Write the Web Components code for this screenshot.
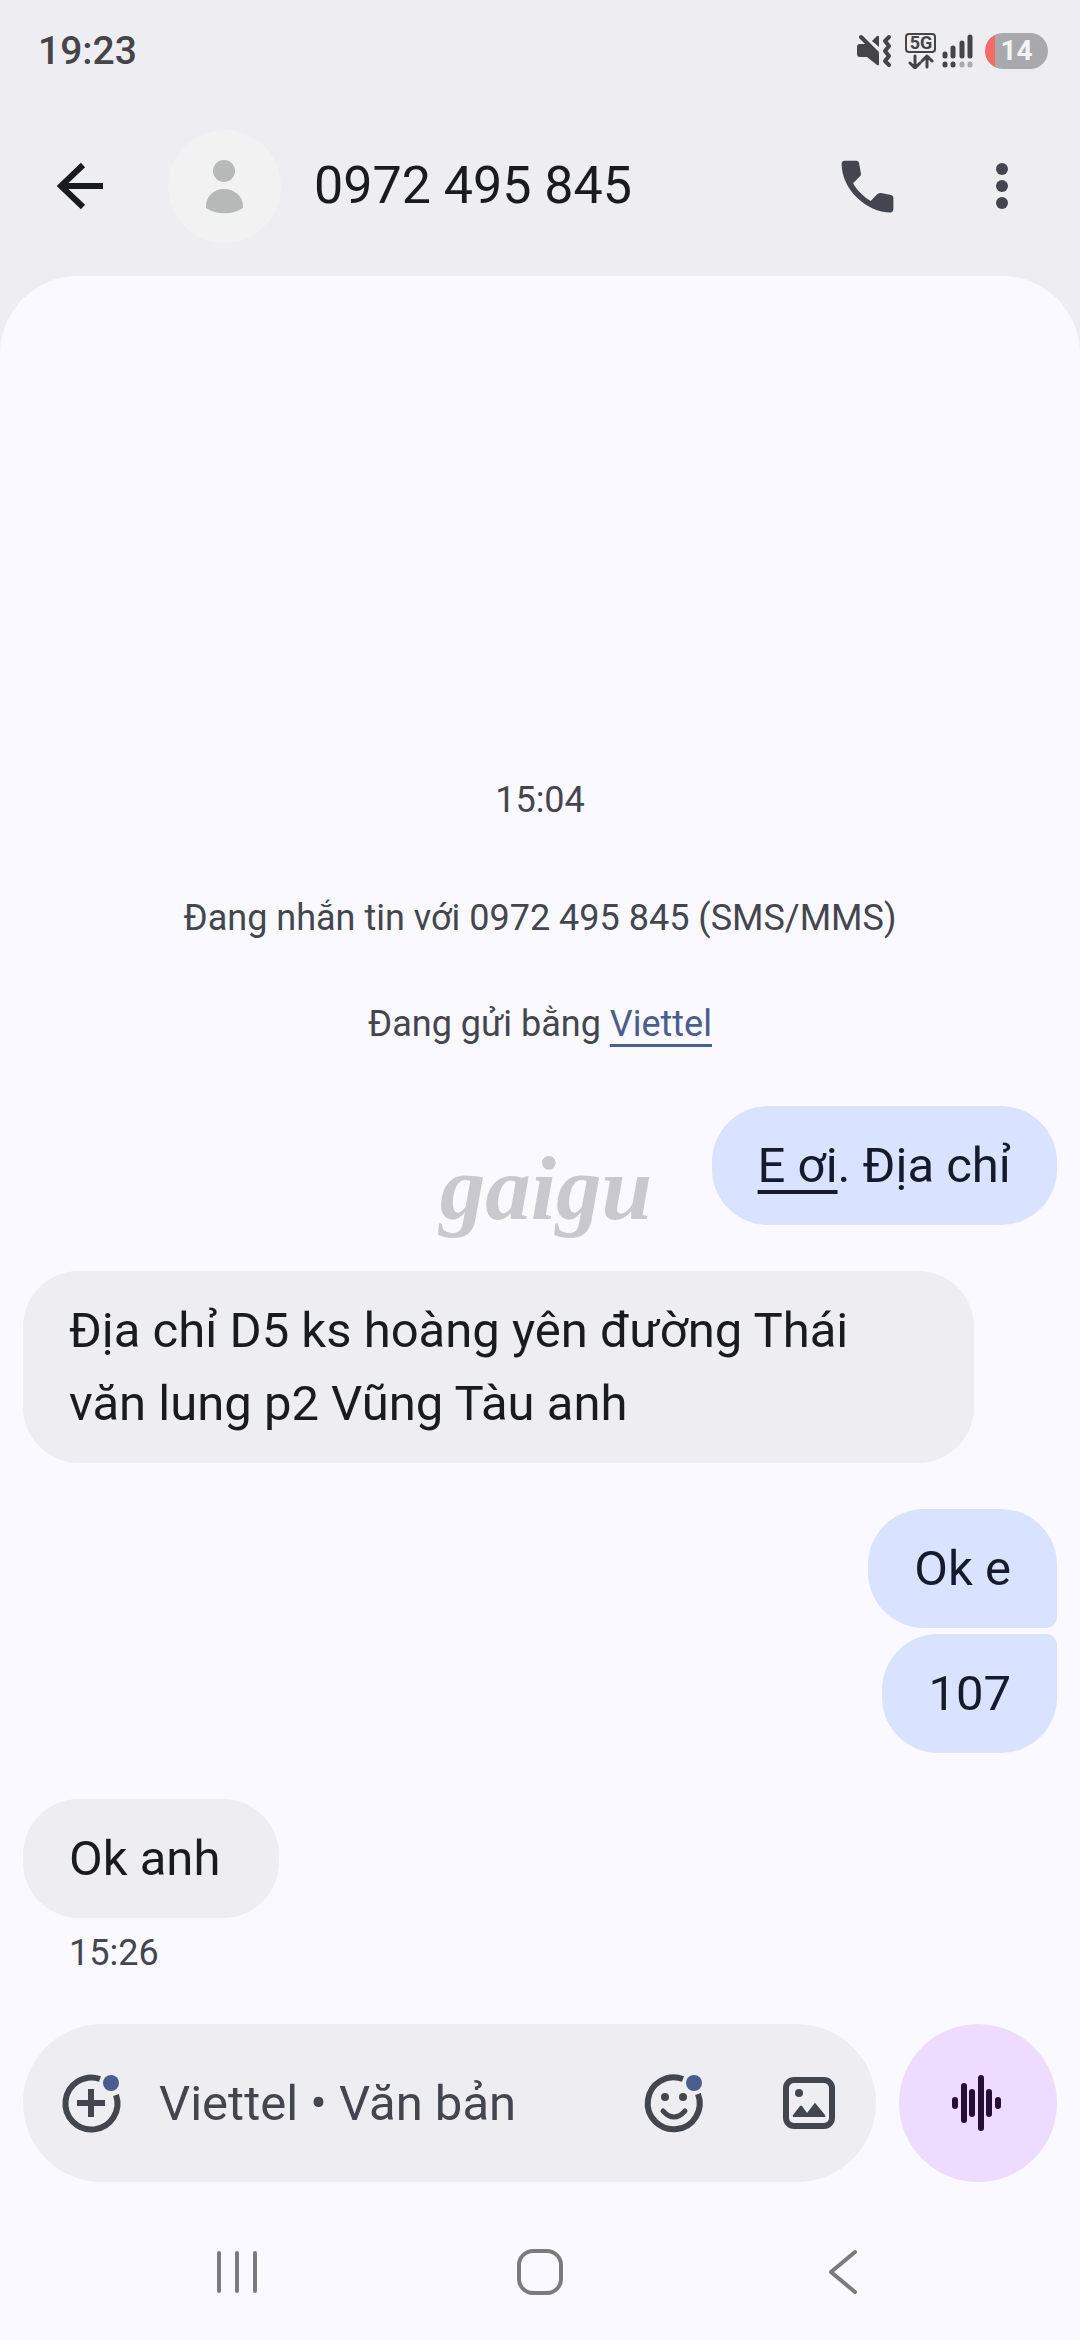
<!DOCTYPE html>
<html lang="vi">
<head>
<meta charset="utf-8">
<meta name="viewport" content="width=device-width, initial-scale=1">
<title>0972 495 845</title>
<style>
  html, body { margin: 0; }
  body { background: #eeedf2; font-family: Roboto, "Noto Sans", sans-serif; color: #1a1b20; }
</style>
</head>
<body>
<chat-screen>
  <status-bar slot="top" time="19:23" network="5G" battery="14"></status-bar>
  <app-bar slot="top">0972 495 845</app-bar>

  <thread-note>15:04</thread-note>
  <thread-note>Đang nhắn tin với 0972 495 845 (SMS/MMS)</thread-note>
  <thread-note>Đang gửi bằng <a href="#sim">Viettel</a></thread-note>
  <message-group side="out">
    <chat-bubble side="out"><a href="#event">E ơi</a>. Địa chỉ</chat-bubble>
  </message-group>
  <message-group side="in">
    <chat-bubble side="in">Địa chỉ D5 ks hoàng yên đường Thái văn lung p2 Vũng Tàu anh</chat-bubble>
  </message-group>
  <message-group side="out">
    <chat-bubble side="out" join="below">Ok e</chat-bubble>
    <chat-bubble side="out" join="above">107</chat-bubble>
  </message-group>
  <message-group side="in" time="15:26">
    <chat-bubble side="in">Ok anh</chat-bubble>
  </message-group>

  <message-composer slot="bottom" hint="Viettel • Văn bản"></message-composer>
  <system-nav slot="bottom"></system-nav>
  <water-mark slot="overlay">gaigu</water-mark>
</chat-screen>

<script>
const ICONS = {
  back: [68, 68, `<path d="M57 34H16M37 13L15 34l22 21" fill="none" stroke="currentColor" stroke-width="6"/>`],
  person: [113, 113, `<g fill="#b7b9b8"><circle cx="56" cy="41" r="11"/><path d="M38 76c0-10 8-17 18-17s19 7 19 17v2c-10 7-27 7-37 0z"/></g>`],
  call: [69, 69, `<path transform="scale(2.875)" fill="currentColor" d="M19.95 21q-3.125 0-6.175-1.363t-5.55-3.862-3.862-5.55T3 4.05q0-.45.3-.75t.75-.3H8.1q.35 0 .625.238t.325.562l.65 3.5q.05.4-.025.675T9.4 8.45L6.975 10.9q.5.925 1.187 1.787t1.513 1.663q.775.775 1.625 1.438T13.1 17l2.35-2.35q.225-.225.588-.337t.712-.063l3.45.7q.35.1.575.363T21 15.9v4.05q0 .45-.3.75t-.75.3z"/>`],
  more: [68, 68, `<g fill="currentColor"><circle cx="34" cy="17" r="6"/><circle cx="34" cy="34" r="6"/><circle cx="34" cy="51" r="6"/></g>`],
  mute: [36, 34, `<g fill="currentColor"><path d="M0 13q0-3 3-3h8l11 10v10q0 2-2 1L10 23H3q-3 0-3-3z"/><path d="M15 7l5-5q2-1 2 1v10z"/></g><g fill="none" stroke="currentColor" stroke-width="4" stroke-linecap="round" stroke-linejoin="round"><path d="M4 3l16 16"/><path d="M32 3l-4 4 4 5-4 5 4 5-4 5 4 4"/></g>`],
  data: [32, 36, `<rect x="1" y="1" width="29" height="18" rx="3" fill="none" stroke="currentColor" stroke-width="2"/><g fill="none" stroke="currentColor" stroke-width="3" stroke-linecap="round" stroke-linejoin="round"><path d="M10 23v11M5 30l5 5 5-5M22 34V24M17 28l5-5 5 5"/></g>`],
  signal: [32, 34, `<g stroke="currentColor" stroke-width="5" stroke-linecap="round"><path d="M3 20v2M11 14v8M20 9v13M28 3v19M3 30v1M11 30v1"/><path d="M20 30v1M28 30v1" opacity=".4"/></g>`],
  add: [68, 68, `<g fill="none" stroke="currentColor" stroke-width="6"><path d="M43 10A26 26 0 1 0 59 26"/><path d="M34 20v28M20 34h28"/></g><circle cx="54" cy="14" r="8" fill="#4a5d8e"/>`],
  smile: [68, 68, `<g fill="none" stroke="currentColor" stroke-width="6"><path d="M43 10A26 26 0 1 0 58 25"/><path d="M23 42q11 12 22 0" stroke-width="5" stroke-linecap="round"/></g><g fill="currentColor"><circle cx="25" cy="28" r="4"/><circle cx="43" cy="28" r="4"/></g><circle cx="54" cy="14" r="8" fill="#4a5d8e"/>`],
  image: [68, 68, `<rect x="11" y="11" width="46" height="46" rx="8" fill="none" stroke="currentColor" stroke-width="6"/><g fill="currentColor"><circle cx="24" cy="24" r="4"/><path d="M19 48q-2 0-1-2l7-9q1-1 2 0l5 7 7-9q1-2 2 0l9 11q1 2-1 2z"/></g>`],
  voice: [60, 60, `<path d="M7 27v6M16 13v34M24 19v22M33 5v50M41 19v22M50 27v6" stroke="currentColor" stroke-width="6" stroke-linecap="round"/>`],
  recents: [48, 48, `<path d="M6 4v38M24 4v38M42 4v38" stroke="currentColor" stroke-width="4" stroke-linecap="round"/>`],
  home: [48, 48, `<rect x="3" y="2" width="42" height="42" rx="14" fill="none" stroke="currentColor" stroke-width="4"/>`],
  navback: [48, 48, `<path d="M36 3L12 23l24 20" fill="none" stroke="currentColor" stroke-width="4" stroke-linecap="round" stroke-linejoin="round"/>`]
};

const define = (name, css, html) => customElements.define(name, class extends HTMLElement {
  constructor() {
    super();
    this.attachShadow({ mode: 'open' });
  }
  connectedCallback() {
    this.shadowRoot.innerHTML = `<style>${css}</style>${html(this)}`;
  }
});

const BUTTON = `button { flex: none; display: flex; align-items: center; justify-content: center; margin: 0; padding: 0; border: 0; background: none; color: inherit; font: inherit; }`;

define('ui-icon', `:host { display: block; flex: none; } svg { display: block; }`, el => {
  const [w, h, body] = ICONS[el.getAttribute('name')];
  return `<svg width="${w}" height="${h}" viewBox="0 0 ${w} ${h}" aria-hidden="true">${body}</svg>`;
});

define('chat-screen', `
  :host { display: flex; flex-direction: column; min-height: 100vh; position: relative; }
  .sheet { flex: 1; display: flex; flex-direction: column; background: #faf9ff; border-radius: 78px 78px 0 0; }
  main { flex: 1; display: flex; flex-direction: column; justify-content: flex-end; padding: 0 23px 47px; }
`, () => `
  <slot name="top"></slot>
  <div class="sheet"><main><slot></slot></main><slot name="bottom"></slot></div>
  <slot name="overlay"></slot>
`);

define('status-bar', `
  :host { display: flex; align-items: center; height: 102px; padding: 0 32px 0 38px; color: #454548; }
  time { flex: 1; font-size: 39px; font-weight: 500; }
  .icons { display: flex; align-items: center; }
  .net { position: relative; margin: 0 5px 0 12px; }
  .net span { position: absolute; inset: 0 0 auto; text-align: center; font-size: 18px; line-height: 20px; font-weight: 700; }
  .battery { margin-left: 11px; width: 63px; height: 36px; border-radius: 18px; background: linear-gradient(90deg, #f46b66 10px, #a9a9ad 10px); color: #f4f4f6; font-size: 28px; line-height: 36px; font-weight: 700; text-align: center; }
`, el => `
  <time>${el.getAttribute('time')}</time>
  <div class="icons">
    <ui-icon name="mute"></ui-icon>
    <div class="net"><ui-icon name="data"></ui-icon><span>${el.getAttribute('network')}</span></div>
    <ui-icon name="signal"></ui-icon>
    <div class="battery">${el.getAttribute('battery')}</div>
  </div>
`);

define('app-bar', `
  :host { display: flex; align-items: center; height: 168px; padding: 0 44px 6px 46px; color: #44464f; }
  ${BUTTON}
  .back { color: #1a1b20; }
  .avatar { margin: 0 33px 0 54px; border-radius: 50%; background: #f2f2f2; }
  h1 { flex: 1; margin: 0; font-size: 52px; line-height: 64px; font-weight: 400; color: #1a1b20; }
  .more { margin-left: 66px; }
`, () => `
  <button class="back" aria-label="Quay lại"><ui-icon name="back"></ui-icon></button>
  <ui-icon class="avatar" name="person"></ui-icon>
  <h1><slot></slot></h1>
  <button aria-label="Gọi"><ui-icon name="call"></ui-icon></button>
  <button class="more" aria-label="Tùy chọn khác"><ui-icon name="more"></ui-icon></button>
`);

define('thread-note', `
  :host { display: block; margin-bottom: 58px; text-align: center; font-size: 36px; line-height: 48px; color: #44464f; }
  :host(:first-of-type) { margin-bottom: 70px; }
  ::slotted(a) { color: #4a5d8e; text-decoration-thickness: 3px; text-underline-offset: 8px; }
`, () => `<slot></slot>`);

define('message-group', `
  :host { display: flex; flex-direction: column; gap: 6px; align-items: flex-start; margin-top: 46px; }
  :host([side="out"]) { align-items: flex-end; }
  :host(:first-of-type) { margin-top: 0; }
  time { margin: 5px 0 0 46px; font-size: 36px; line-height: 48px; color: #44464f; }
`, el => `<slot></slot>${el.hasAttribute('time') ? `<time>${el.getAttribute('time')}</time>` : ''}`);

define('chat-bubble', `
  :host { display: block; box-sizing: border-box; max-width: 92%; padding: 23px 46px; border-radius: 56px; font-size: 49px; line-height: 73px; background: #eeedf2; color: #1a1b20; }
  :host([side="in"]) { min-width: 256px; }
  :host([side="out"]) { background: #d9e2ff; color: #151b2c; }
  :host([join="below"]) { border-bottom-right-radius: 11px; }
  :host([join="above"]) { border-top-right-radius: 11px; }
  ::slotted(a) { color: inherit; text-decoration-thickness: 4px; text-underline-offset: 8px; text-decoration-skip-ink: none; }
`, () => `<slot></slot>`);

define('message-composer', `
  :host { display: flex; gap: 23px; padding: 0 23px 23px; color: #44464f; }
  ${BUTTON}
  .field { flex: 1; min-width: 0; display: flex; align-items: center; height: 158px; box-sizing: border-box; padding: 0 33px 0 34px; border-radius: 79px; background: #eeedf2; }
  input { flex: 1; min-width: 0; margin: 0 34px; padding: 0; border: 0; outline: 0; background: none; font: inherit; font-size: 49px; line-height: 73px; height: 73px; color: #1a1b20; }
  input::placeholder { color: #44464f; opacity: 1; }
  .image { margin-left: 67px; }
  .voice { width: 158px; height: 158px; border-radius: 50%; background: #eddcff; color: #240f38; }
`, el => `
  <div class="field">
    <button aria-label="Thêm"><ui-icon name="add"></ui-icon></button>
    <input type="text" aria-label="${el.getAttribute('hint')}" placeholder="${el.getAttribute('hint')}">
    <button aria-label="Biểu tượng cảm xúc"><ui-icon name="smile"></ui-icon></button>
    <button class="image" aria-label="Thư viện ảnh"><ui-icon name="image"></ui-icon></button>
  </div>
  <button class="voice" aria-label="Ghi âm"><ui-icon name="voice"></ui-icon></button>
`);

define('system-nav', `
  :host { display: grid; grid-template-columns: repeat(3, 1fr); height: 135px; padding: 0 86px; color: #7b7b7f; }
  ${BUTTON}
`, () => `
  <button aria-label="Gần đây"><ui-icon name="recents"></ui-icon></button>
  <button aria-label="Trang chủ"><ui-icon name="home"></ui-icon></button>
  <button aria-label="Trở về"><ui-icon name="navback"></ui-icon></button>
`);

define('water-mark', `
  :host { position: absolute; inset: 0; display: flex; align-items: center; justify-content: center; padding: 38px 0 0 12px; pointer-events: none; font: italic 700 91px/104px "Liberation Serif", serif; color: #c9c8ce; }
`, () => `<slot></slot>`);
</script>
</body>
</html>
